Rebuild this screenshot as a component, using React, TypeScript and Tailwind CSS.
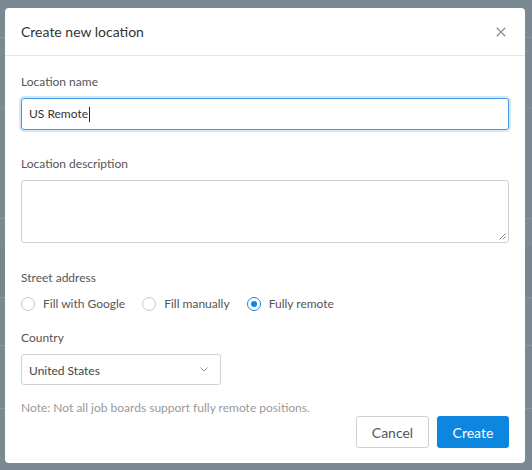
import React from "react";

const font = { fontFamily: "Lato, 'Open Sans', 'Noto Sans', sans-serif" };

function Radio({ checked, label }: { checked?: boolean; label: string }) {
  return (
    <label className="flex items-center gap-2 text-[12px] text-[#555] leading-5">
      <span
        className={
          checked
            ? "flex h-[14px] w-[14px] items-center justify-center rounded-full border border-[#1485e0] bg-white"
            : "flex h-[14px] w-[14px] items-center justify-center rounded-full border border-[#c8c8c8] bg-white"
        }
      >
        {checked && <span className="h-[6px] w-[6px] rounded-full bg-[#1485e0]" />}
      </span>
      <span>{label}</span>
    </label>
  );
}

export default function App() {
  return (
    <div className="relative h-[470px] w-full overflow-hidden bg-[#7b8993]" style={font}>
      {/* backdrop page hints */}
      <div className="absolute inset-x-0 top-[37px] h-px bg-[#8a979f]" />
      <div className="absolute inset-x-0 top-[107px] h-px bg-[#84919a]" />
      <div className="absolute inset-x-0 top-[218px] h-px bg-[#8a979f]" />
      <div className="absolute inset-x-0 top-[247px] h-[50px] bg-[#76848e]" />
      <div className="absolute inset-x-0 top-[297px] h-px bg-[#8a979f]" />
      <div className="absolute inset-x-0 top-[345px] h-px bg-[#8a979f]" />
      <div className="absolute inset-x-0 top-[408px] h-px bg-[#8a979f]" />

      <div className="relative ml-[5px] mt-[8px] flex h-[455px] w-[520px] flex-col rounded-[4px] bg-white">
        <div className="flex h-[48px] items-center justify-between border-b border-[#e5e5e5] pl-[16px] pr-[19px]">
          <span className="text-[14px] text-[#333]">Create new location</span>
          <svg width="10" height="10" viewBox="0 0 10 10" className="text-[#8f8f8f]">
            <path d="M0.7 0.7L9.3 9.3M9.3 0.7L0.7 9.3" stroke="currentColor" strokeWidth="1.3" />
          </svg>
        </div>

        <div className="flex flex-1 flex-col px-[16px] pt-[16px]">
          <div className="text-[12px] leading-5 text-[#555]">Location name</div>
          <div className="mt-[6px] flex h-[32px] items-center rounded-[3px] border border-[#3d9be9] px-[7px] shadow-[0_0_0_2px_rgba(61,155,233,0.22)]">
            <span className="text-[12px] text-[#333]">US Remote</span>
            <span className="ml-px h-[15px] w-px bg-[#222]" />
          </div>

          <div className="mt-[24px] text-[12px] leading-5 text-[#555]">Location description</div>
          <div className="relative mt-[6px] h-[63px] rounded-[3px] border border-[#cfcfcf]">
            <svg width="7" height="7" viewBox="0 0 7 7" className="absolute bottom-[2px] right-[2px]">
              <path d="M6.5 0.5L0.5 6.5M6.5 3.5L3.5 6.5" stroke="#888" strokeWidth="0.9" />
            </svg>
          </div>

          <div className="mt-[25px] text-[12px] leading-5 text-[#555]">Street address</div>
          <div className="mt-[6px] flex items-center gap-[17px]">
            <Radio label="Fill with Google" />
            <Radio label="Fill manually" />
            <Radio checked label="Fully remote" />
          </div>

          <div className="mt-[14px] text-[12px] leading-5 text-[#555]">Country</div>
          <div className="mt-[6px] flex h-[31px] w-[200px] items-center justify-between rounded-[3px] border border-[#d2d2d2] pl-[7px] pr-[12px]">
            <span className="mt-[2px] text-[12px] text-[#444]">United States</span>
            <svg width="8" height="5" viewBox="0 0 8 5">
              <path d="M0.5 0.5L4 4L7.5 0.5" stroke="#999" strokeWidth="1" fill="none" />
            </svg>
          </div>

          <div className="mt-[14px] text-[12px] leading-[18px] text-[#999]">
            Note: Not all job boards support fully remote positions.
          </div>

          <div className="-mt-[1px] flex justify-end gap-[8px]">
            <button className="h-[32px] w-[73px] rounded-[3px] border border-[#d0d0d0] bg-white text-[14px] text-[#555]">
              Cancel
            </button>
            <button className="h-[32px] w-[72px] rounded-[3px] bg-[#0d86e0] text-[14px] text-white">
              Create
            </button>
          </div>
        </div>
      </div>
    </div>
  );
}
